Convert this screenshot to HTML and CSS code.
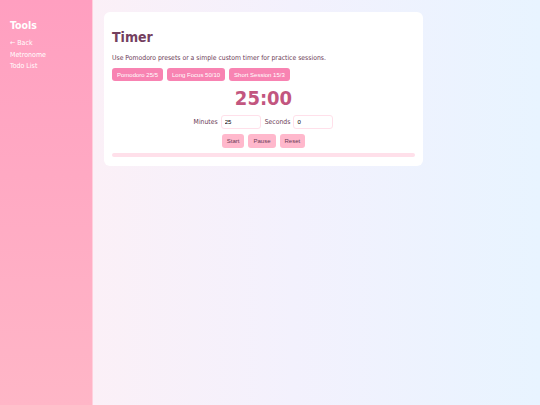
FILE: index.html
```html
<!DOCTYPE html>
<html lang="en">

<head>
    <meta charset="UTF-8">
    <meta name="viewport" content="width=device-width, initial-scale=1.0">
    <title>Timer</title>
    <link rel="stylesheet" href="styles.css">
</head>

<body>
    <div class="layout">
        <!-- Sidebar -->
        <nav class="sidebar">
            <h2>Tools</h2>
            <a href="#">&larr; Back</a>
            <a href="#">Metronome</a>
            <a href="#">Todo List</a>
        </nav>

        <main class="main">
            <div class="card">
                <h1>Timer</h1>
                <p class="intro">Use Pomodoro presets or a simple custom timer for practice sessions.</p>

                <div class="presets">
                    <button class="preset">Pomodoro 25/5</button>
                    <button class="preset">Long Focus 50/10</button>
                    <button class="preset">Short Session 15/3</button>
                </div>

                <div class="display" id="display">25:00</div>

                <div class="inputs">
                    <label>Minutes <input type="number" id="minutes" value="25"></label>
                    <label>Seconds <input type="number" id="seconds" value="0"></label>
                </div>

                <div class="controls">
                    <button class="control">Start</button>
                    <button class="control">Pause</button>
                    <button class="control">Reset</button>
                </div>

                <div class="progress"><div class="progress-fill" style="width: 0%;"></div></div>
            </div>
        </main>
    </div>
</body>

</html>
```

FILE: styles.css
```css
html,
body {
    margin: 0;
    height: 100%;
}

body {
    font-family: "DejaVu Sans Condensed", "DejaVu Sans", sans-serif;
    color: #6b3a55;
}

.layout {
    display: flex;
    height: 100%;
}

.sidebar {
    width: 72px;
    padding: 10px;
    background: linear-gradient(180deg, #ff9fc0, #ffb6c7);
    border-right: 1px solid #ffd0dd;
    display: flex;
    flex-direction: column;
}

.sidebar h2 {
    color: white;
    font-size: 10.5px;
    font-weight: 600;
    margin: 9px 0 7px;
}

.sidebar a {
    color: white;
    text-decoration: none;
    font-size: 7px;
    line-height: 11.5px;
}

.main {
    flex: 1;
    padding: 12px 11px;
    background: linear-gradient(90deg, #fbf0f7, #f3f1fd 45%, #e8f4ff);
}

.card {
    width: 303px;
    background: white;
    border-radius: 6px;
    padding: 8px 8px 9px;
}

h1 {
    font-size: 14px;
    font-weight: bold;
    color: #74405f;
    margin: 9px 0 9px;
}

.intro {
    font-size: 6.8px;
    margin: 0 0 6px;
}

.presets {
    display: flex;
    gap: 4px;
}

.preset,
.control {
    font-family: "Liberation Sans", Arial, sans-serif;
    font-size: 6px;
    border: none;
    border-radius: 3px;
    height: 13px;
    padding: 0 5px;
    cursor: pointer;
}

.preset {
    background-color: #f883b2;
    color: white;
}

.display {
    text-align: center;
    font-size: 20px;
    font-weight: bold;
    color: #c2567f;
    margin: 5px 0 5px;
}

.inputs {
    display: flex;
    justify-content: center;
    gap: 4px;
    font-size: 6.8px;
}

.inputs label {
    display: flex;
    align-items: center;
    gap: 3px;
}

.inputs input {
    width: 32px;
    height: 10px;
    font-size: 6px;
    border: 1px solid #ffe0ea;
    border-radius: 3px;
    padding: 1px 3px;
    -moz-appearance: textfield;
}

.inputs input::-webkit-inner-spin-button {
    -webkit-appearance: none;
}

.controls {
    display: flex;
    justify-content: center;
    gap: 4px;
    margin-top: 5px;
}

.control {
    height: 14px;
    background-color: #ffb8cc;
    color: #6b3a55;
}

.progress {
    margin-top: 5px;
    height: 4px;
    background-color: #ffe0ea;
    border-radius: 2px;
    overflow: hidden;
}

.progress-fill {
    height: 100%;
    background-color: #f883b2;
}
```
